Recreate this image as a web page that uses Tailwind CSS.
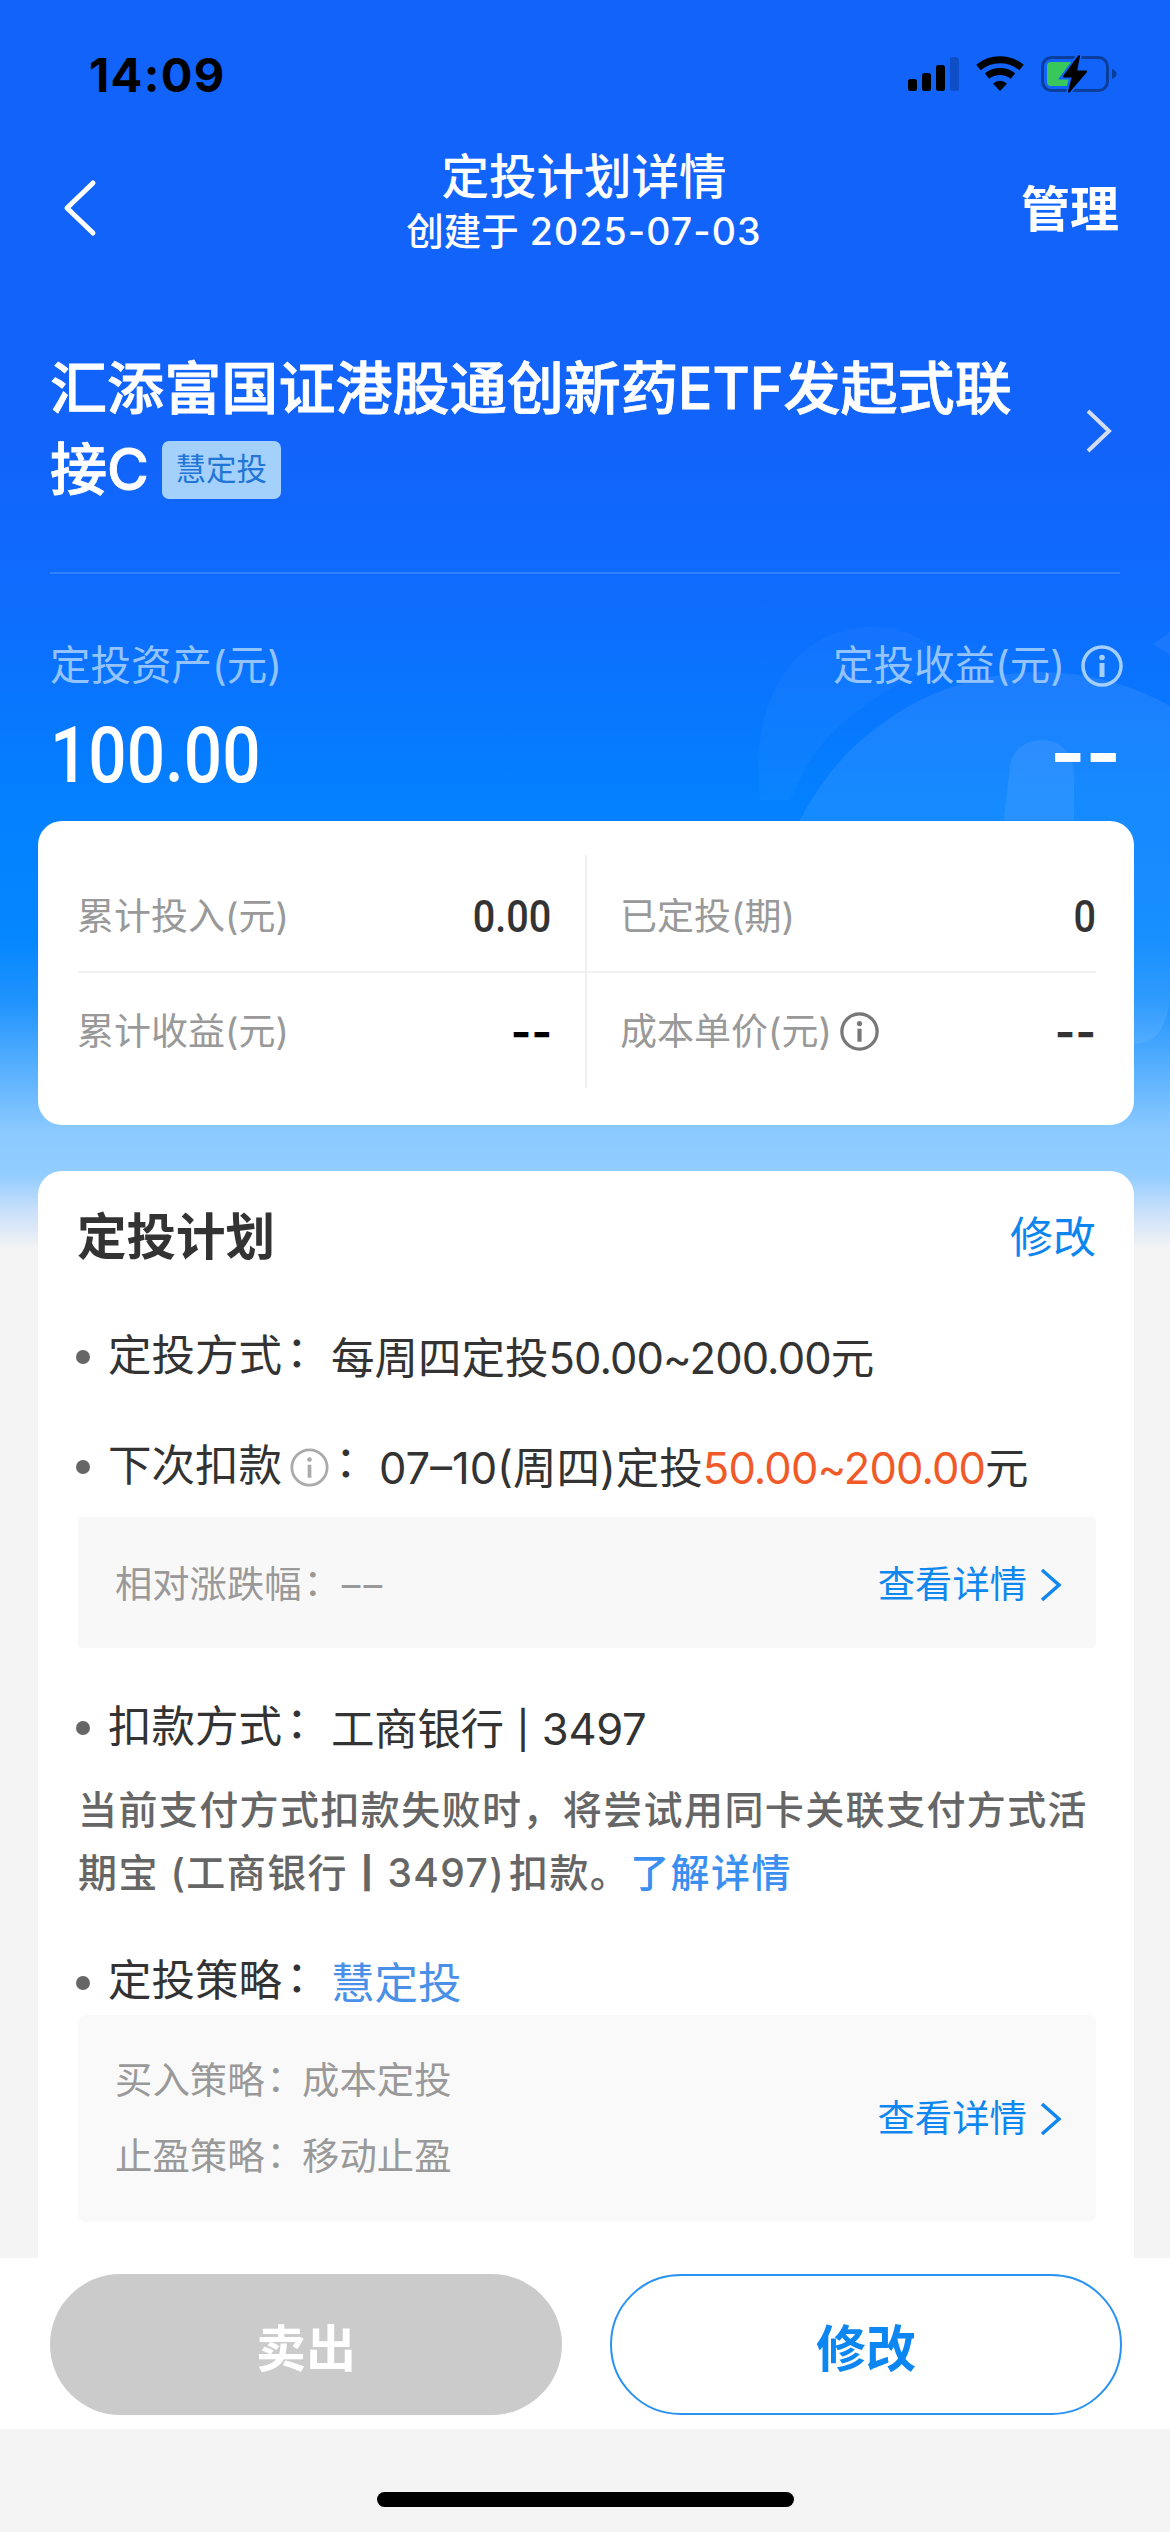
<!DOCTYPE html>
<html lang="zh-CN">
<head>
<meta charset="utf-8">
<title>定投计划详情</title>
<script src="https://cdn.jsdelivr.net/npm/@tailwindcss/browser@4"></script>
</head>
<body class="bg-[#f4f4f4]">
<main class="relative flex h-[2532px] w-[1170px] flex-col overflow-hidden bg-[#f4f4f4] font-[Inter,'Noto_Sans_CJK_SC',sans-serif] whitespace-nowrap text-[#333]">

  <!-- hero backdrop -->
  <div class="absolute inset-x-0 top-0 h-[1250px] bg-[linear-gradient(180deg,#1263fa_0px,#1263fa_440px,#0e6cfd_600px,#0380ff_800px,#0587ff_940px,#1f93fd_1000px,#8ac9ff_1130px,#93cdff_1175px,#c8dffb_1210px,#f4f4f4_1250px)]">
    <svg class="absolute inset-0" width="1170" height="1250" fill="none">
      <path d="M758 770 C758 690 800 627 872 627 C905 627 930 640 945 660 C880 690 820 730 800 780 L790 800 H760Z" fill="#fff" fill-opacity=".03"/>
      <path d="M1153 644 L1170 632 V655Z" fill="#fff" fill-opacity=".06"/>
      <path d="M800 820 A268 268 0 0 1 1170 706 V1000 C1165 1030 1155 1044 1134 1044 H800Z" fill="#fff" fill-opacity=".08"/>
      <path d="M1004 820 L1010 765 C1013 750 1025 740 1042 740 C1062 740 1074 755 1074 775 V820Z" fill="#fff" fill-opacity=".08"/>
    </svg>
  </div>

  <!-- status bar -->
  <div class="relative flex h-[140px] items-start justify-between pr-[53px] pl-[89px] text-black">
    <div class="mt-[47px] text-[47px] leading-[56px] font-bold tracking-[1.300px]">14:09</div>
    <svg class="mt-[50px]" width="210" height="46" viewBox="0 0 210 46">
      <rect x="1" y="29" width="9" height="12" rx="2.5"/><rect x="15" y="23" width="9" height="18" rx="2.5"/><rect x="29" y="15" width="9" height="26" rx="2.5"/><rect x="43" y="7" width="9" height="34" rx="2.5" opacity=".2"/>
      <g fill="none" stroke="#000" stroke-width="7"><path d="M71.500 17.500 A34 34 0 0 1 114.500 17.500"/><path d="M80 26 A21 21 0 0 1 106 26"/></g>
      <path d="M86 33.500 Q93 28 100 33.500 L93 41Z"/>
      <rect x="135.500" y="7.500" width="65" height="33" rx="9" fill="none" stroke="#000" stroke-opacity=".38" stroke-width="3"/>
      <path d="M205 19 Q209.500 21 209.500 24 T205 29Z" opacity=".38"/>
      <path d="M144 12 H166 L157 28 H162 L160 36 H144 Q140 36 140 32 V16 Q140 12 144 12Z" fill="#38c75b"/>
      <path d="M172.500 5 L156 27 H165.500 L161.500 42.500 L180 21 H169.500Z" stroke="#1263fa" stroke-width="5" paint-order="stroke"/>
      <path d="M172 6 L157 26.500 H166 L162 41.500 L179 21.500 H169Z" stroke="#000" stroke-width="2" stroke-linejoin="round"/>
    </svg>
  </div>

  <!-- navigation -->
  <header class="relative flex h-[140px] items-start justify-between px-[51px] text-white">
    <svg class="mt-[36px] -ml-[2px] w-[98px]" viewBox="0 0 98 64" height="64" fill="none" stroke="#fff" stroke-width="5" stroke-linecap="round" stroke-linejoin="round"><path d="M44 7 L18 32 L44 57"/></svg>
    <div class="mt-[5px] flex flex-col items-center">
      <h1 class="text-[47.500px] leading-[64px] font-medium">定投计划详情</h1>
      <p class="flex gap-[11px] text-[37.500px] leading-[46px] font-medium"><span>创建于</span><span class="tracking-[1.100px]">2025-07-03</span></p>
    </div>
    <div class="mt-[38px] text-[49px] leading-[64px] font-bold">管理</div>
  </header>

  <!-- fund name -->
  <section class="relative mx-[50px] flex h-[294px] items-start justify-between border-b-2 border-[#2f82fc] text-white">
    <h2 class="mt-[68px] text-[57.100px] leading-[81px] font-medium"><span class="[-webkit-text-stroke:0.8px_white]">汇添富国证港股通创新药ETF发起式联</span><br><span class="flex items-center"><span class="[-webkit-text-stroke:0.8px_white]">接C</span><span class="ml-[13px] h-[58px] rounded-[7px] bg-[#a4d0fc] px-[14.500px] text-[30.500px] leading-[56px] font-normal text-[#2075d6]"><span class="-ml-px">慧定投</span></span></span></h2>
    <svg class="mt-[126px] mr-[6px]" width="30" height="50" fill="none" stroke="#d3dcf2" stroke-width="4"><path d="M4 5 L25 25 L4 45"/></svg>
  </section>

  <!-- totals -->
  <section class="relative flex h-[247px] justify-between pr-[49px] pl-[50px] pt-[65px] text-white">
    <div>
      <div class="text-[40.500px] leading-[54px] text-[#93c4ff]">定投资产(元)</div>
      <div class="mt-[23px] origin-left scale-x-[0.865] font-[Roboto] text-[78px] leading-[80px] font-medium">100.00</div>
    </div>
    <div class="flex flex-col items-end">
      <div class="flex items-center gap-[16px] text-[40.500px] leading-[54px] text-[#93c4ff]">定投收益(元)
        <svg class="-mr-[2px]" width="42" height="42" viewBox="0 0 42 42" fill="none" stroke="#a5cfff"><circle cx="21" cy="21" r="19" stroke-width="3.500"/><path d="M21 18 V32" stroke-width="5"/><circle cx="21" cy="12.500" r="2.800" fill="#a5cfff" stroke="none"/></svg>
      </div>
      <div class="mt-[19px] text-[76px] leading-[80px] font-bold">--</div>
    </div>
  </section>

  <!-- figures -->
  <section class="relative ml-[38px] grid h-[304px] w-[1096px] grid-cols-2 grid-rows-[118px_115px] rounded-[24px] bg-white pr-[38px] pl-[40px] pt-[34px] text-[37px] text-[#999]">
    <div class="flex items-center justify-between border-r-2 border-b-2 border-[#f0f0f0] pt-[8px] pr-[34px]"><span class="-ml-px">累计投入(元)</span><span class="origin-right scale-x-[0.9] font-[Roboto] text-[44px] font-medium text-[#333]">0.00</span></div>
    <div class="flex items-center justify-between border-b-2 border-[#f0f0f0] pt-[8px] pl-[33px]"><span>已定投(期)</span><span class="origin-right scale-x-[0.9] font-[Roboto] text-[44px] font-medium text-[#333]">0</span></div>
    <div class="flex items-center justify-between border-r-2 border-[#f0f0f0] pt-[2px] pr-[33px]"><span class="-ml-px">累计收益(元)</span><span class="text-[44px] font-bold text-black">--</span></div>
    <div class="flex items-center justify-between pt-[2px] pl-[33px]"><span class="flex items-center gap-[8px]">成本单价(元)
      <svg width="39" height="39" viewBox="0 0 42 42" fill="none" stroke="#777"><circle cx="21" cy="21" r="19" stroke-width="3.500"/><path d="M21 18 V32" stroke-width="4.500"/><circle cx="21" cy="12.500" r="2.800" fill="#777" stroke="none"/></svg></span><span class="text-[44px] font-bold text-[#333]">--</span></div>
  </section>

  <!-- plan -->
  <section class="relative mt-[46px] ml-[38px] flex h-[1087px] w-[1096px] flex-col rounded-t-[24px] bg-white pr-[38px] pl-[40px] text-[43.500px]">
    <div class="flex h-[130px] items-center justify-between pt-[2px]"><h3 class="-ml-px text-[49.500px] font-bold">定投计划</h3><a class="text-[43px] text-[#0c86ee]">修改</a></div>

    <div class="mt-[24px] flex h-[64px] items-center"><i class="-ml-[2px] size-[14px] rounded-full bg-[#666]"></i><span class="-mt-[2px] ml-[18px] w-[223px]">定投方式<span class="inline-block translate-x-[4px] -translate-y-[4px]">：</span></span><span class="mt-[3px]">每周四定投<span class="tracking-[-0.900px]">50.00~200.00</span>元</span></div>

    <div class="mt-[46px] flex h-[64px] items-center"><i class="-ml-[2px] size-[14px] rounded-full bg-[#666]"></i><span class="-mt-[2px] ml-[18px]">下次扣款</span>
      <svg class="ml-[8px]" width="39" height="39" viewBox="0 0 42 42" fill="none" stroke="#aaa"><circle cx="21" cy="21" r="19" stroke-width="3"/><path d="M21 18 V32" stroke-width="4"/><circle cx="21" cy="12.500" r="2.500" fill="#aaa" stroke="none"/></svg>
      <span class="-mt-[2px] ml-[2px] w-[48px]"><span class="inline-block translate-x-[4px] -translate-y-[4px]">：</span></span><span class="mt-[3px]">07–10(周四)定投<span class="tracking-[-0.900px] text-[#f05a28]">50.00~200.00</span>元</span></div>

    <div class="mt-[18px] flex h-[131px] items-center justify-between rounded-[4px] bg-[#f9f8f8] pt-[4px] pr-[33px] pl-[37px] text-[37.300px] text-[#999]"><span>相对涨跌幅<span class="inline-block translate-x-[2px] -translate-y-[2px]">：</span><span class="ml-[3px]">–</span><span class="ml-[3px]">–</span></span>
      <a class="flex items-center gap-[12px] text-[#1087ee]">查看详情<svg width="24" height="36" fill="none" stroke="#1087ee" stroke-width="3.500"><path d="M3 3 L20 18 L3 33"/></svg></a></div>

    <div class="mt-[48px] flex h-[64px] items-center"><i class="-ml-[2px] size-[14px] rounded-full bg-[#666]"></i><span class="-mt-[2px] ml-[18px] w-[223px]">扣款方式<span class="inline-block translate-x-[4px] -translate-y-[4px]">：</span></span><span class="mt-[3px] tracking-[-0.300px]">工商银行 <span class="inline-block origin-center scale-y-[0.85]">|</span> 3497</span></div>

    <p class="mt-[18px] text-[39px] leading-[63px] font-medium tracking-[1.400px] text-[#666]">当前支付方式扣款失败时，将尝试用同卡关联支付方式活<br>期宝 (工商银行 <span class="inline-block origin-center scale-y-[0.8] font-bold">|</span> 3497)<span class="ml-[4px]">扣款。</span><a class="text-[#3a8ff0]">了解详情</a></p>

    <div class="mt-[47px] flex h-[64px] items-center"><i class="-ml-[2px] size-[14px] rounded-full bg-[#666]"></i><span class="-mt-[5px] ml-[18px] w-[223px]">定投策略<span class="inline-block translate-x-[4px] -translate-y-[4px]">：</span></span><a class="mt-[1px] text-[#4a90e8]">慧定投</a></div>

    <div class="flex h-[207px] items-center justify-between rounded-[8px] bg-[#f9f9f9] pr-[33px] pl-[37px] text-[37.400px] leading-[76px] text-[#999]"><div><p>买入策略<span class="inline-block translate-x-[2px] -translate-y-[2px]">：</span>成本定投</p><p>止盈策略<span class="inline-block translate-x-[2px] -translate-y-[2px]">：</span>移动止盈</p></div>
      <a class="flex items-center gap-[12px] text-[#1087ee]">查看详情<svg width="24" height="36" fill="none" stroke="#1087ee" stroke-width="3.500"><path d="M3 3 L20 18 L3 33"/></svg></a></div>
  </section>

  <!-- actions -->
  <footer class="relative grid h-[171px] grid-cols-2 gap-[48px] bg-white pt-[16px] pr-[48px] pl-[50px] text-[50px] font-bold">
    <button class="h-[141px] rounded-full bg-[#cccbcc] pt-[10px] text-white">卖出</button>
    <button class="h-[141px] rounded-full border-2 border-[#2a92f3] pt-[10px] text-[#0c87f2]">修改</button>
  </footer>
  <div class="relative mt-[63px] h-[15px] w-[417px] self-center rounded-full bg-black"></div>
</main>
</body>
</html>
